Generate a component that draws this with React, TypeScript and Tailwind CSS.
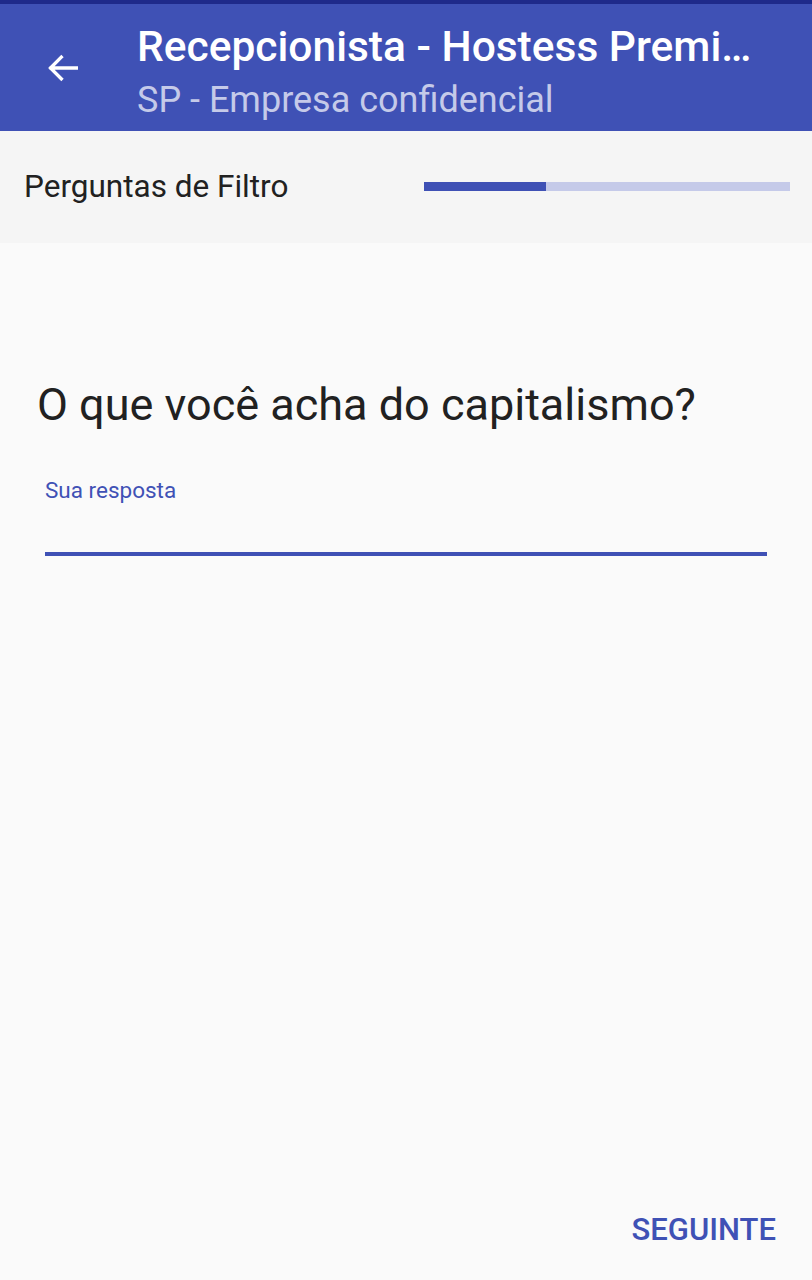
import React from "react";

export default function App() {
    return (
        <div
            className="w-[812px] h-[1280px] flex flex-col bg-[#fafafa] overflow-hidden"
            style={{ fontFamily: "Roboto, 'Liberation Sans', sans-serif" }}
        >
            {/* status strip */}
            <div className="h-[4px] bg-[#1f2a8a]" />

            {/* app bar */}
            <header className="h-[127px] bg-[#3f51b5] flex">
                <div className="w-[137px] flex items-center justify-center pr-[12px]">
                    <svg width="40" height="40" viewBox="0 0 24 24" fill="none">
                        <path
                            d="M20 12H4.8M11 5.5L4.5 12l6.5 6.5"
                            stroke="white"
                            strokeWidth="2"
                            strokeLinecap="square"
                        />
                    </svg>
                </div>
                <div className="flex-1 min-w-0 pr-[50px] pt-[19px]">
                    <h1 className="text-white text-[42.5px] leading-[48px] font-medium truncate">
                        Recepcionista - Hostess Premium Atendimento
                    </h1>
                    <p className="text-[#c5cae9] text-[36px] leading-[44px] mt-[7px]">
                        SP - Empresa confidencial
                    </p>
                </div>
            </header>

            {/* step header */}
            <div className="h-[112px] bg-[#f5f5f5] flex items-center px-[24px]">
                <span className="text-[#212121] text-[31.5px] leading-[36px] flex-1">
                    Perguntas de Filtro
                </span>
                <div className="w-[366px] h-[9px] bg-[#c5cae9] flex mr-[-2px] mb-[2px]">
                    <div className="w-[122px] h-full bg-[#3f51b5]" />
                </div>
            </div>

            {/* question */}
            <main className="flex-1 flex flex-col px-[37px] pt-[136px]">
                <h2 className="text-[#212121] text-[45px] leading-[52px]">
                    O que você acha do capitalismo?
                </h2>
                <div className="mx-[8px] mt-[45px]">
                    <label className="block text-[#3f51b5] text-[22.5px] leading-[28px]">
                        Sua resposta
                    </label>
                    <div className="h-[48px]" />
                    <div className="h-[4px] bg-[#3f51b5]" />
                </div>
            </main>

            {/* footer */}
            <footer className="h-[100px] flex justify-end items-center pr-[36px]">
                <button className="text-[#3f51b5] text-[31px] leading-[40px] font-medium">
                    SEGUINTE
                </button>
            </footer>
        </div>
    );
}
